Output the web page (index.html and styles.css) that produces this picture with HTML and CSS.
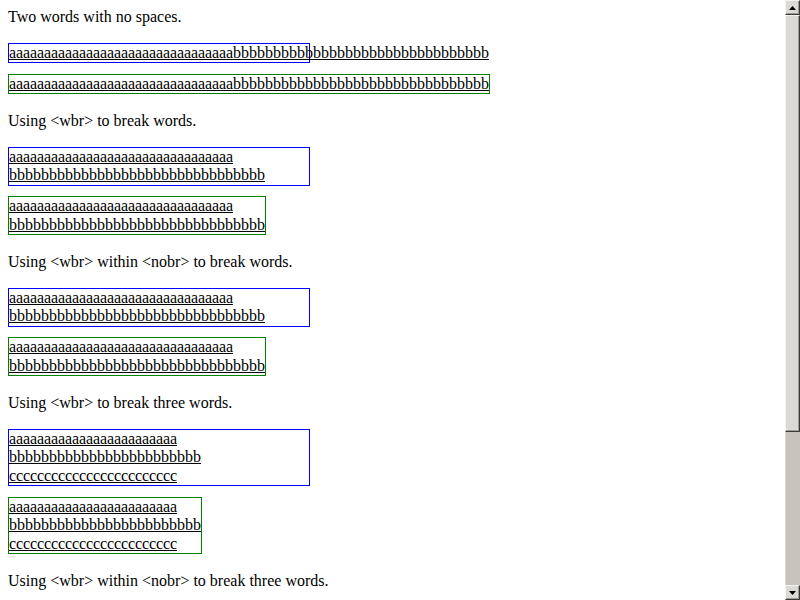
FILE: index.html
```html
<!DOCTYPE html>
<html lang="en">
<head>
    <meta charset="UTF-8">
    <title>wbr tests</title>
    <link rel="stylesheet" href="styles.css">
</head>
<body>
<div class="page">
    <p class="label">Two words with no spaces.</p>
    <div class="box fixed"><span class="u"><span class="n">aaaaaaaaaaaaaaaaaaaaaaaaaaaaaaaa</span>bbbbbbbbbbbbbbbbbbbbbbbbbbbbbbbb</span></div>
    <div class="box shrink"><span class="u"><span class="n">aaaaaaaaaaaaaaaaaaaaaaaaaaaaaaaa</span>bbbbbbbbbbbbbbbbbbbbbbbbbbbbbbbb</span></div>

    <p class="label">Using &lt;wbr&gt; to break words.</p>
    <div class="box fixed"><span class="u"><span class="n">aaaaaaaaaaaaaaaaaaaaaaaaaaaaaaaa</span><wbr>bbbbbbbbbbbbbbbbbbbbbbbbbbbbbbbb</span></div>
    <div class="box shrink"><span class="u"><span class="n">aaaaaaaaaaaaaaaaaaaaaaaaaaaaaaaa</span><wbr>bbbbbbbbbbbbbbbbbbbbbbbbbbbbbbbb</span></div>

    <p class="label">Using &lt;wbr&gt; within &lt;nobr&gt; to break words.</p>
    <div class="box fixed"><span class="u"><span class="n">aaaaaaaaaaaaaaaaaaaaaaaaaaaaaaaa</span><wbr>bbbbbbbbbbbbbbbbbbbbbbbbbbbbbbbb</span></div>
    <div class="box shrink"><span class="u"><span class="n">aaaaaaaaaaaaaaaaaaaaaaaaaaaaaaaa</span><wbr>bbbbbbbbbbbbbbbbbbbbbbbbbbbbbbbb</span></div>

    <p class="label">Using &lt;wbr&gt; to break three words.</p>
    <div class="box fixed"><span class="u"><span class="n">aaaaaaaaaaaaaaaaaaaaaaaa</span><wbr>bbbbbbbbbbbbbbbbbbbbbbbb<wbr><span class="n">cccccccccccccccccccccccc</span></span></div>
    <div class="box shrink"><span class="u"><span class="n">aaaaaaaaaaaaaaaaaaaaaaaa</span><wbr>bbbbbbbbbbbbbbbbbbbbbbbb<wbr><span class="n">cccccccccccccccccccccccc</span></span></div>

    <p class="label">Using &lt;wbr&gt; within &lt;nobr&gt; to break three words.</p>
    <div class="box fixed"><span class="u"><span class="n">aaaaaaaaaaaaaaaaaaaaaaaa</span><wbr>bbbbbbbbbbbbbbbbbbbbbbbb<wbr><span class="n">cccccccccccccccccccccccc</span></span></div>
    <div class="box shrink"><span class="u"><span class="n">aaaaaaaaaaaaaaaaaaaaaaaa</span><wbr>bbbbbbbbbbbbbbbbbbbbbbbb<wbr><span class="n">cccccccccccccccccccccccc</span></span></div>
</div>
<div class="scrollbar">
    <div class="sb-btn">
        <svg width="7" height="4" viewBox="0 0 7 4"><path d="M0 4h7L3.5 0z"/></svg>
    </div>
    <div class="sb-thumb"></div>
    <div class="sb-track"></div>
    <div class="sb-btn">
        <svg width="7" height="4" viewBox="0 0 7 4"><path d="M0 0h7L3.5 4z"/></svg>
    </div>
</div>
</body>
</html>
```

FILE: styles.css
```css
html, body {
    margin: 0;
    height: 100%;
    overflow: hidden;
}
body {
    display: flex;
    font-family: 'Liberation Serif', serif;
    font-size: 16px;
    line-height: 18.5px;
    color: #000;
}
.page {
    flex: 1;
    min-width: 0;
    padding: 8px;
    overflow: hidden;
}
.label {
    margin: 0 0 16px;
}
.box {
    border: 1px solid;
}
.fixed {
    width: 300px;
    border-color: #00f;
    margin-bottom: 10.5px;
}
.shrink {
    width: min-content;
    border-color: #008000;
    margin-bottom: 18px;
}
.u {
    text-decoration: underline;
}
/* a and c glyphs render at 7px in the original */
.n {
    letter-spacing: -0.104px;
}

/* drawn scrollbar */
.scrollbar {
    width: 15px;
    flex-shrink: 0;
    display: flex;
    flex-direction: column;
    background: #c5c3bc;
}
.sb-btn, .sb-thumb {
    box-sizing: border-box;
    background: #dcdad5;
    border: 1px solid;
    border-color: #f5f4f2 #3c3c3a #3c3c3a #f5f4f2;
    box-shadow: inset -1px -1px 0 #9d9b96;
}
.sb-btn {
    height: 15px;
    display: flex;
    align-items: center;
    justify-content: center;
}
.sb-btn svg {
    display: block;
}
.sb-thumb {
    height: 417px;
}
.sb-track {
    flex: 1;
    border-left: 1px solid #d9d7d2;
}
```
